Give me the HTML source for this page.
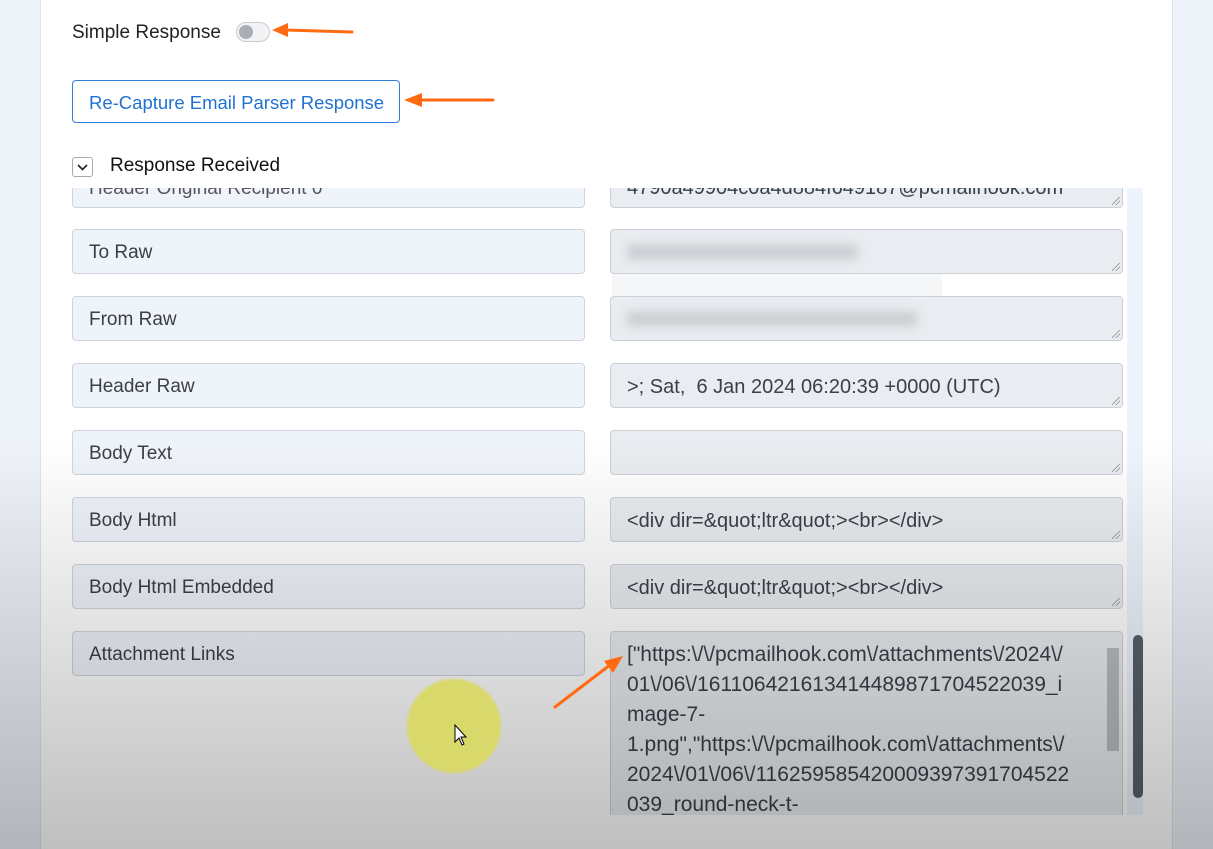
<!DOCTYPE html>
<html><head><style>
*{box-sizing:border-box;margin:0;padding:0}
body{width:1213px;height:849px;overflow:hidden;background:#eef2f9;font-family:"Liberation Sans",sans-serif;position:relative;color:#222}
.card{position:absolute;left:40px;top:0;width:1133px;height:849px;background:#fff;border-left:1px solid #dde3ee;border-right:1px solid #dde3ee}
.abs{position:absolute}
.lbl{position:absolute;left:72px;width:513px;height:45px;background:#eff3fa;border:1px solid #cfd4dc;border-radius:4px;font-size:19px;color:#3a3f48;padding:12px 16px}
.ta{position:absolute;left:610px;width:513px;height:45px;background:#e9ecf0;border:1px solid #cdd1d6;border-radius:4px;font-size:20px;color:#3a3f48;padding:12px 16px;overflow:hidden;white-space:nowrap}
.rh:after{content:"";position:absolute;right:2px;bottom:2px;width:8px;height:8px;background:linear-gradient(135deg,transparent 45%,#888 46%,#888 52%,transparent 53%,transparent 70%,#888 71%,#888 77%,transparent 78%)}
.clip{position:absolute;left:60px;top:188px;width:1070px;height:21px;overflow:hidden}
</style></head><body>
<div class="card"></div>
<div class="abs" style="left:72px;top:22px;font-size:19px;color:#222">Simple Response</div>
<div class="abs" style="left:236px;top:22px;width:34px;height:20px;border:1px solid #c8ccd2;border-radius:10px;background:#f2f3f5"><div style="position:absolute;left:2px;top:2px;width:14px;height:14px;border-radius:50%;background:#a9adb5"></div></div>
<div class="abs" style="left:72px;top:80px;width:328px;height:43px;border:1px solid #2f7fd6;border-radius:4px;color:#1f72d0;font-size:18.5px;padding:11px 0 0 16px;white-space:nowrap">Re-Capture Email Parser Response</div>
<div class="abs" style="left:72px;top:157px;width:21px;height:20px;border:1px solid #aaa;border-radius:3px;background:#fff"><svg width="19" height="18" style="position:absolute;left:0;top:0"><path d="M5 7 L9.5 11.5 L14 7" fill="none" stroke="#222" stroke-width="1.6"/></svg></div>
<div class="abs" style="left:110px;top:155px;font-size:19px;color:#111">Response Received</div>
<div class="abs" style="left:1127px;top:188px;width:16px;height:627px;background:#edf4fc"></div>
<div class="abs" style="left:1133px;top:635px;width:10px;height:163px;background:#5a6068;border-radius:5px"></div>
<div class="clip">
<div class="lbl" style="left:12px;top:-25px;padding-top:14px;color:#555">Header Original Recipient 0</div>
<div class="ta rh" style="left:550px;top:-25px;padding-top:13px">4790a49904c0a4d884f649187@pcmailhook.com</div>
</div>
<div class="lbl" style="top:229px">To Raw</div>
<div class="ta rh" style="top:229px"><span style="display:inline-block;width:230px;height:14px;background:#c9ccd1;filter:blur(5px);margin-top:2px"></span></div>
<div class="lbl" style="top:296px">From Raw</div>
<div class="ta rh" style="top:296px"><span style="display:inline-block;width:290px;height:14px;background:#c9ccd1;filter:blur(5px);margin-top:2px"></span></div>
<div class="abs" style="left:612px;top:274px;width:330px;height:22px;background:#f5f6f7"></div>
<div class="lbl" style="top:363px">Header Raw</div>
<div class="ta rh" style="top:363px;padding-top:12px">&gt;; Sat,&nbsp; 6 Jan 2024 06:20:39 +0000 (UTC)</div>
<div class="lbl" style="top:430px">Body Text</div>
<div class="ta rh" style="top:430px"></div>
<div class="lbl" style="top:497px">Body Html</div>
<div class="ta rh" style="top:497px">&lt;div dir=&amp;quot;ltr&amp;quot;&gt;&lt;br&gt;&lt;/div&gt;</div>
<div class="lbl" style="top:564px">Body Html Embedded</div>
<div class="ta rh" style="top:564px">&lt;div dir=&amp;quot;ltr&amp;quot;&gt;&lt;br&gt;&lt;/div&gt;</div>
<div class="lbl" style="top:631px">Attachment Links</div>
<div class="ta" style="top:631px;height:184px;line-height:30px;padding:8px 20px 0 16px;border-bottom:none;border-radius:4px 4px 0 0;font-size:21px">["https:\/\/pcmailhook.com\/attachments\/2024\/<br>01\/06\/161106421613414489871704522039_i<br>mage-7-<br>1.png","https:\/\/pcmailhook.com\/attachments\/<br>2024\/01\/06\/116259585420009397391704522<br>039_round-neck-t-</div>
<div class="abs" style="left:1107px;top:648px;width:12px;height:103px;background:#b9bcc0"></div>
<div class="abs" style="left:0;top:440px;width:1213px;height:409px;background:linear-gradient(rgba(0,0,0,0),rgba(0,0,0,0.25));pointer-events:none"></div>
<div class="abs" style="left:407px;top:679px;width:94px;height:94px;border-radius:50%;background:#d9d86a;filter:blur(1px)"></div>
<svg class="abs" style="left:0;top:0" width="1213" height="849">
<g stroke="#ff6a13" stroke-width="3" fill="#ff6a13" stroke-linecap="round">
<line x1="285" y1="30" x2="352" y2="32"/><polygon points="272,30 288,23 288,37" stroke="none"/>
<line x1="420" y1="100" x2="493" y2="100"/><polygon points="404,100 422,93 422,107" stroke="none"/>
<line x1="555" y1="707" x2="610" y2="665"/><polygon points="623,656 604,661 613,673" stroke="none"/>
</g>
<path d="M455 725 L455 742 L459 738 L462 745 L464 744 L461 737 L466 737 Z" fill="#fff" stroke="#000" stroke-width="1"/>
</svg>
</body></html>
